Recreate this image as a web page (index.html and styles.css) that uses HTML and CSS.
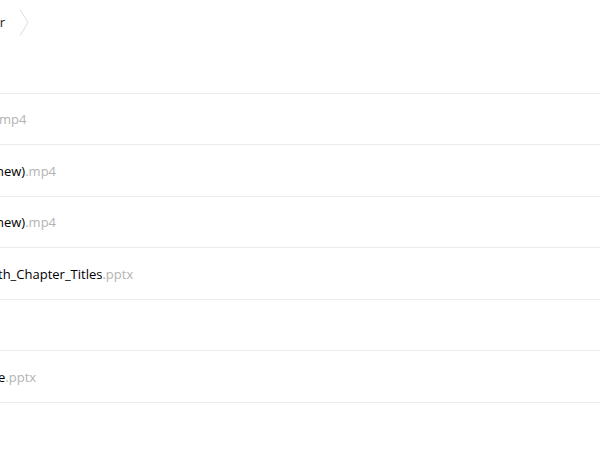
FILE: index.html
```html
<!DOCTYPE html>
<html lang="en">
<head>
    <meta charset="UTF-8">
    <title>Files</title>
    <link rel="stylesheet" href="styles.css">
</head>
<body>

    <div class="header">
        <div class="crumbs">
            <span class="crumb">Folder</span>
            <svg class="chevron" width="10" height="27" viewBox="0 0 10 27">
                <path d="M1 0.5 L9 13.5 L1 26.5" fill="none" stroke="#dcdcdc" stroke-width="1"/>
            </svg>
        </div>
    </div>

    <div class="list">
        <div class="row"><span class="name cut-a"><span class="ext">mp4</span></span></div>
        <div class="row"><span class="name cut-b">new)<span class="ext">.mp4</span></span></div>
        <div class="row"><span class="name cut-b">new)<span class="ext">.mp4</span></span></div>
        <div class="row"><span class="name cut-c">th_Chapter_Titles<span class="ext">.pptx</span></span></div>
        <div class="row"><span class="name"></span></div>
        <div class="row"><span class="name cut-c">e<span class="ext">.pptx</span></span></div>
    </div>

</body>
</html>
```

FILE: styles.css
```css
body {
    font-family: 'Open Sans', sans-serif;
    font-size: 13px;
    color: #000;
    background: #fff;
    margin: 0;
    overflow: hidden;
}
.header {
    height: 92.6px;
}
.crumbs {
    display: flex;
    align-items: center;
    height: 44px;
    margin-left: -36px;
}
.crumb {
    display: block;
    width: 41px;
    text-align: right;
    color: #222;
    font-size: 13px;
    margin-right: 14px;
}
.chevron {
    display: block;
}
.list {
    border-top: 1px solid #ebebeb;
}
.row {
    display: flex;
    align-items: center;
    height: 49.5px;
    padding-top: 1px;
    border-bottom: 1px solid #ebebeb;
    white-space: nowrap;
}
.row:first-child {
    padding-top: 0;
    height: 50.5px;
}
.name {
    display: block;
}
.ext {
    color: #b3b3b3;
}
.cut-a {
    margin-left: -1px;
}
.cut-b {
    margin-left: -4px;
}
.cut-c {
    margin-left: -2px;
}
```
